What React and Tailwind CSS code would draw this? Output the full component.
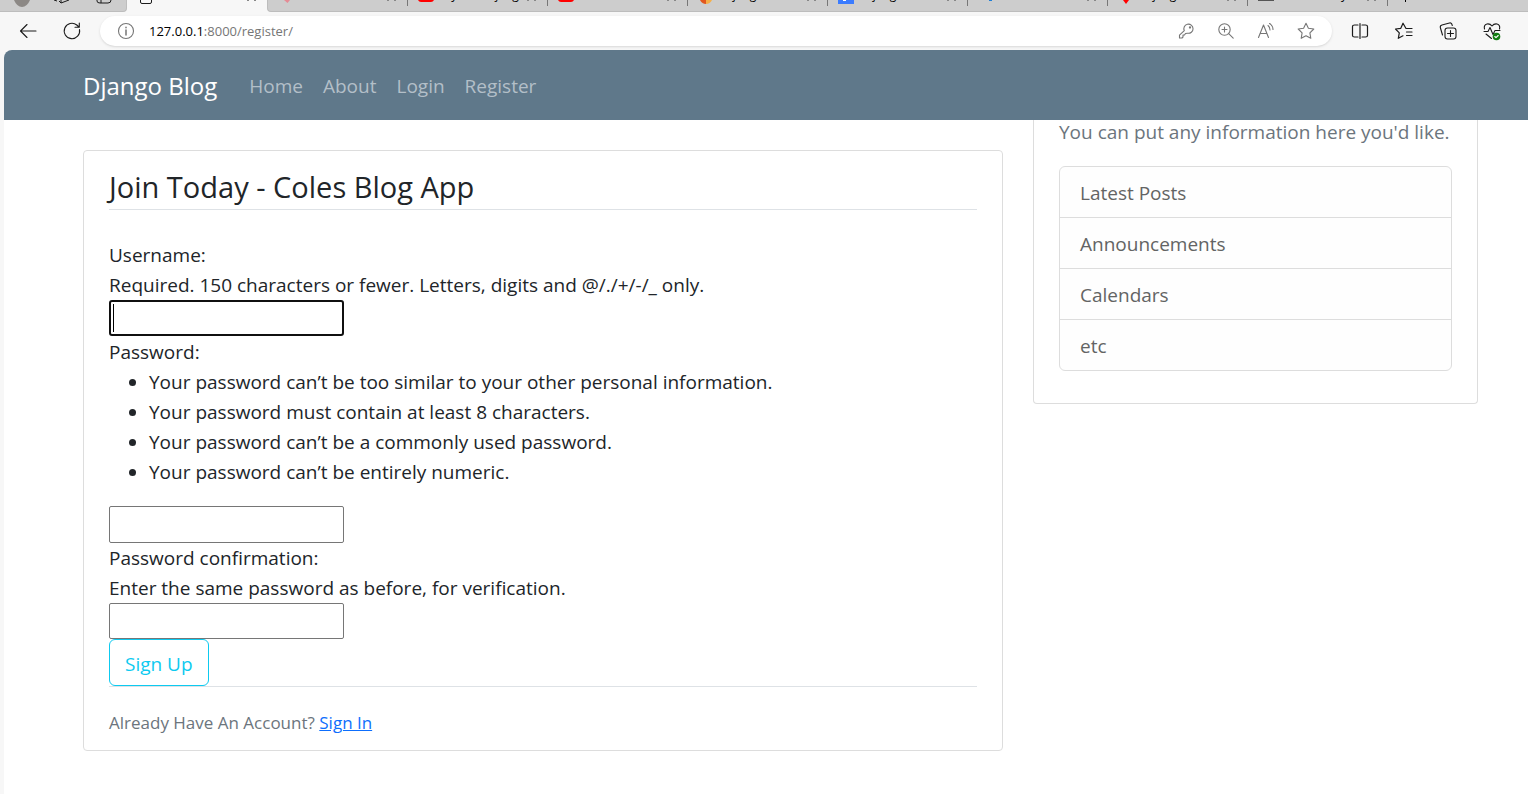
const I = ({ children, label, size = 20, tone = "text-[#1b1b1b]" }) => (
  <button type="button" aria-label={label} className={`flex size-5 shrink-0 items-center justify-center ${tone}`}>
    <svg width={size} height={size} viewBox="0 0 20 20" fill="none" stroke="currentColor" strokeWidth="1.1" strokeLinecap="round" strokeLinejoin="round">
      {children}
    </svg>
  </button>
);

const gray = "text-[#767676]";

const tabs = [
  { icon: "pink", text: "" },
  { icon: "red", text: "Python Django" },
  { icon: "red", text: "" },
  { icon: "orange", text: "Django" },
  { icon: "blue", text: "Django" },
  { icon: "dot", text: "" },
  { icon: "pin", text: "Django" },
  { icon: "dark", text: "The Library" },
];

function TabIcon({ kind }) {
  return (
    <svg width="16" height="11" viewBox="0 0 16 11" className="shrink-0" aria-hidden="true">
      {kind === "pink" && <path d="M6 0h6l-2.500 3z" fill="#e58b95" />}
      {kind === "red" && <path d="M0 0h16q-1 2-3 2H3Q1 2 0 0z" fill="#f00" />}
      {kind === "orange" && (
        <>
          <path d="M2 0h6v4Q4 4 2 0z" fill="#e2571e" />
          <path d="M8 0h6q-2 4-6 4z" fill="#f5b04a" />
        </>
      )}
      {kind === "blue" && (
        <>
          <path d="M0 0h16v4H0z" fill="#3b7cff" />
          <path d="M5 0h3v1H5z" fill="#fff" />
        </>
      )}
      {kind === "dot" && <path d="M11 0h3v1h-3z" fill="#1f7fd6" />}
      {kind === "pin" && <path d="M5 0h6L8 4z" fill="#f00" />}
      {kind === "dark" && <path d="M0 0h16v1H0z" fill="#555" />}
    </svg>
  );
}

function CloseTip() {
  return (
    <svg width="10" height="2" viewBox="0 0 10 2" fill="#888" className="shrink-0" aria-hidden="true">
      <path d="M0 0h2v1H0zM7 0h2v1H7z" />
    </svg>
  );
}

function TabStrip() {
  return (
    <div className="flex h-3 overflow-hidden bg-[#f7f7f7]">
      <div className="w-[127px] shrink-0 rounded-br border-r border-b border-[#bdbdbd] bg-[#cdcdcd] pl-3.5">
        <svg width="112" height="11" viewBox="0 0 112 11" fill="none" stroke="#1b1b1b" aria-hidden="true">
          <path d="M0 0h16Q13 7 8 7T0 0z" fill="#8c8885" stroke="none" />
          <path d="M40 0l3 1M47 0v3l8-3M45 1l2 2" />
          <path d="M83 0v1q0 2 3 2h8q3 0 3-3M87 0v3" />
        </svg>
      </div>
      <div className="flex w-[140px] shrink-0 justify-between pr-2.5 pl-3">
        <svg width="14" height="4" viewBox="0 0 14 4" fill="none" stroke="#1b1b1b" aria-hidden="true">
          <path d="M1.500 0v2q0 1.500 1.500 1.500h8q1.500 0 1.500-1.500V0" />
        </svg>
        <CloseTip />
      </div>
      <div className="flex flex-1 overflow-hidden rounded-bl border-b border-l border-[#bdbdbd] bg-[#cdcdcd]">
        {tabs.map((t, i) => (
          <div key={i} className="flex w-[140px] shrink-0 items-start pl-2.5">
            <TabIcon kind={t.icon} />
            <span className="-mt-[13px] ml-2.5 min-w-0 flex-1 text-xs leading-4 whitespace-nowrap text-black">{t.text}</span>
            <CloseTip />
            <span className="ml-2.5 h-1.5 w-px shrink-0 bg-[#777]" />
          </div>
        ))}
        <span className="ml-[17px] h-0.5 w-px shrink-0 bg-black" />
      </div>
    </div>
  );
}

function Toolbar() {
  return (
    <div className="flex h-[38px] items-center bg-[#f7f7f7] pr-[26px] pl-[18px]">
      <I label="Back"><path d="M18 10H2.500M9 3.500L2.500 10 9 16.500" /></I>
      <div className="w-6" />
      <I label="Refresh"><path d="M17.500 8.500A7.700 7.700 0 1 1 14.800 4L17 6M17.300 2v4.300H13" /></I>
      <div className="ml-[18px] flex h-[30px] min-w-0 flex-1 items-center rounded-full bg-white pr-4 pl-4 shadow-sm">
        <I label="Site information" tone={gray}><circle cx="10" cy="10" r="7.500" /><path d="M10 9v5M10 6.200v.6" strokeWidth="1.500" /></I>
        <div className="ml-[13px] min-w-0 flex-1 pt-px text-[13px] text-[#767676]"><span className="text-black">127.0.0.1</span>:8000/register/</div>
        <div className="flex gap-5">
          <I label="Password" tone={gray}><path d="M8.300 9.700A4.600 4.600 0 1 1 11.500 12.200L9.500 12.500 8.500 14H7v2l-1 1H3.500v-2.800z" /><circle cx="14" cy="6.500" r=".6" fill="currentColor" /></I>
          <I label="Zoom" tone={gray}><circle cx="8.500" cy="8.500" r="5.700" /><path d="M12.700 12.700l4.500 4.500M8.500 6v5M6 8.500h5" /></I>
          <I label="Read aloud" tone={gray}><path d="M2.500 16.500L7.500 4 12.500 16.500M4.200 12.500h6.600M12 4.500q2 1.500 2 4.500M13.500 2.500q3.500 2 3.500 6" /></I>
          <I label="Favorite" tone={gray}><path d="M10 2.200l2.400 5 5.400.8-3.900 3.800.9 5.500L10 14.700l-4.800 2.600.9-5.500L2.200 8l5.400-.8z" /></I>
        </div>
      </div>
      <div className="ml-[18px] flex gap-6">
        <I label="Split screen"><path d="M8 4H4.500Q2.500 4 2.500 5.500v9Q2.500 16 4.500 16H8M12 4h3.500q2 0 2 1.500v9q0 1.500-2 1.500H12M10 2.500v15" strokeWidth="1.200" /></I>
        <I label="Favorites"><path d="M18 7.500h-6L9 2.200 6.800 7.300 1.500 8l3.800 3.800-1 5.500L9 14.800M12.500 11h5.500M12.500 14.500h5.500" strokeWidth="1.200" /></I>
        <I label="Collections"><rect x="7" y="7" width="11" height="11" rx="2.500" /><path d="M12.500 9.500v6M9.500 12.500h6M4.500 14L2.300 6.500Q2 4.500 4 4l7.500-2q2-.5 2.500 1.500l.3 1" /></I>
        <I label="Browser essentials"><path d="M2.500 8Q1.500 4 5 3q3-.5 5 2 2-2.500 5-2 3.500 1 2.500 5M2 10.500h4l2-4 3 7 2-4h5M4 13l5.500 4.500" /><circle cx="14.500" cy="15.500" r="3.800" fill="#107c10" stroke="none" /><path d="M12.800 15.500l1.200 1.200 2.200-2.200" stroke="#fff" /></I>
      </div>
    </div>
  );
}

const rules = [
  "Your password can’t be too similar to your other personal information.",
  "Your password must contain at least 8 characters.",
  "Your password can’t be a commonly used password.",
  "Your password can’t be entirely numeric.",
];

const field = "block w-[235px] rounded-xs border border-[#767676] bg-white px-1 outline-none";

export default function App() {
  return (
    <div className="min-h-screen bg-[#f7f7f7] font-['Open_Sans','Noto_Sans',sans-serif] text-[#212529]">
      <TabStrip />
      <Toolbar />
      <div className="ml-1 min-h-[calc(100vh-50px)] overflow-hidden rounded-tl-lg bg-white text-[19px] leading-[30px]">
        <nav className="relative z-10 flex h-[70px] items-center gap-5 bg-[#5f788a] pt-0.5 pr-9 pl-[79px] text-[#b3bfc8]">
          <a href="#" className="mr-3 text-2xl text-white">Django Blog</a>
          <a href="#">Home</a>
          <a href="#">About</a>
          <a href="#">Login</a>
          <a href="#">Register</a>
        </nav>
        <div className="flex items-start pr-[35px] pl-16">
          <main className="w-2/3 px-[15px] pt-[30px]">
            <section className="rounded border border-[#dddddd] px-[25px] pt-[18px] pb-3">
              <form>
                <h1 className="mb-[30px] border-b border-[#dee2e6] pb-1 text-[29px] leading-9">Join Today - Coles Blog App</h1>
                <label htmlFor="username" className="block">Username:</label>
                <p>Required. 150 characters or fewer. Letters, digits and @/./+/-/_ only.</p>
                <div className="relative w-[235px]">
                  <input id="username" className="block h-9 w-full rounded-[3px] border-2 border-[#101010] bg-white px-0.5 outline-none" />
                  <span className="absolute top-1 left-1 h-7 w-px bg-black" />
                </div>
                <label htmlFor="password" className="mt-px block">Password:</label>
                <ul className="mb-[19px] list-disc pl-10">
                  {rules.map((r) => <li key={r}>{r}</li>)}
                </ul>
                <input id="password" type="password" className={`${field} h-[37px]`} />
                <label htmlFor="confirm" className="block">Password confirmation:</label>
                <p>Enter the same password as before, for verification.</p>
                <input id="confirm" type="password" className={`${field} h-9`} />
                <button type="submit" className="block h-[47px] rounded-md border border-[#0dcaf0] px-[15px] pt-0.5 text-[#0dcaf0]">Sign Up</button>
              </form>
              <div className="border-t border-[#dee2e6] pt-5">
                <small className="text-[17px] text-[#6c757d]">Already Have An Account? <a href="#" className="text-[#0d6efd] underline">Sign In</a></small>
              </div>
            </section>
          </main>
          <aside className="w-1/3 px-[15px]">
            <section className="rounded-b border-x border-b border-[#dddddd] px-[25px] pb-8 text-[#6c757d]">
              <p className="-mt-[3px] mb-[19px]">You can put any information here you'd like.</p>
              <ul className="divide-y divide-[#dddddd] rounded-md border border-[#dddddd] bg-[#fefefe] text-[#636464]">
                {["Latest Posts", "Announcements", "Calendars", "etc"].map((t) => <li key={t} className="px-5 pt-[11px] pb-[9px]">{t}</li>)}
              </ul>
            </section>
          </aside>
        </div>
      </div>
    </div>
  );
}
